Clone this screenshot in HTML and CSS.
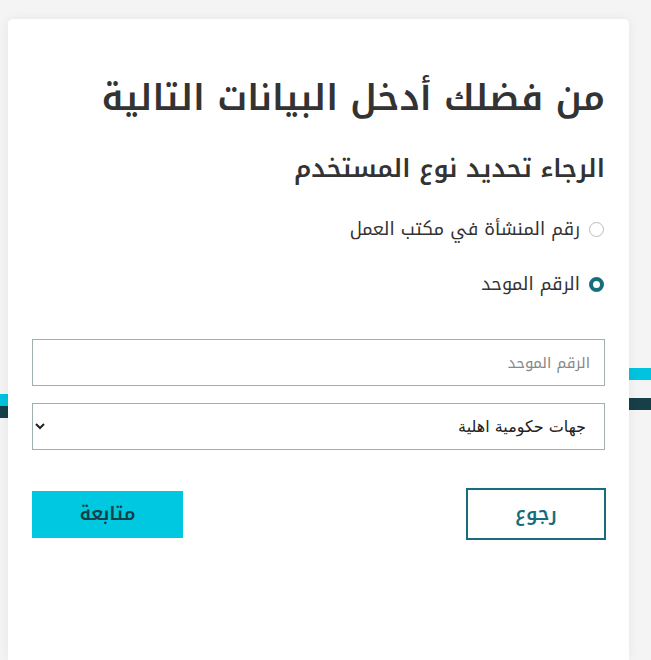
FILE: index.html
```html
<!DOCTYPE html>
<html lang="ar" dir="rtl">
<head>
<meta charset="utf-8">
<link rel="stylesheet" href="styles.css">
</head>
<body>
<div class="stripe stripe-right-a"></div>
<div class="stripe stripe-right-b"></div>
<div class="stripe stripe-left-a"></div>
<div class="stripe stripe-left-b"></div>
<main class="card">
  <h1 class="title">من فضلك أدخل البيانات التالية</h1>
  <h2 class="subtitle">الرجاء تحديد نوع المستخدم</h2>
  <div class="radios">
    <label class="radio"><input type="radio" name="t"><span class="dot"></span><span>رقم المنشأة في مكتب العمل</span></label>
    <label class="radio"><input type="radio" name="t" checked><span class="dot"></span><span>الرقم الموحد</span></label>
  </div>
  <div class="fields">
    <input class="field" type="text" placeholder="الرقم الموحد">
    <select class="field select">
      <option>جهات حكومية اهلية</option>
    </select>
  </div>
  <div class="actions">
    <button class="btn btn-back">رجوع</button>
    <button class="btn btn-next">متابعة</button>
  </div>
</main>
</body>
</html>
```
FILE: styles.css
```css
html, body { margin: 0; padding: 0; }
body {
  background: #f4f4f4;
  font-family: "Noto Kufi Arabic", "Noto Sans Arabic", "Noto Sans", sans-serif;
  color: #333;
  position: relative;
  height: 660px;
  overflow: hidden;
}
.stripe { position: absolute; height: 12px; }
.stripe-right-a { right: 0; width: 40px; top: 368px; background: #00c3df; }
.stripe-right-b { right: 0; width: 40px; top: 398px; background: #163f47; }
.stripe-left-a { left: 0; width: 40px; top: 394px; background: #00c3df; }
.stripe-left-b { left: 0; width: 40px; top: 406px; background: #163f47; }
.card {
  position: relative;
  margin: 19px 22px 0 8px;
  background: #fff;
  border-radius: 5px 5px 0 0;
  box-shadow: 0 0 12px rgba(0,0,0,0.06);
  padding: 49px 24px 0 24px;
  height: 641px;
  box-sizing: border-box;
}
.title {
  margin: 0;
  font-size: 36px;
  font-weight: 600;
  line-height: 60px;
  color: #333;
}
.subtitle {
  margin: 25px 0 0 0;
  font-size: 25px;
  font-weight: 600;
  line-height: 32px;
  color: #333;
}
.radios {
  display: flex;
  flex-direction: column;
  gap: 31px;
  margin-top: 32px;
}
.radio {
  display: flex;
  align-items: center;
  gap: 9px;
  font-size: 18px;
  line-height: 24px;
  color: #333;
  padding-right: 1px;
}
.radio input { display: none; }
.dot {
  width: 15px; height: 15px;
  border-radius: 50%;
  border: 1px solid #bbb;
  box-sizing: border-box;
  background: #fff;
}
.radio input:checked + .dot {
  border: 4px solid #176d7c;
}
.fields {
  display: flex;
  flex-direction: column;
  gap: 17px;
  margin-top: 43px;
}
.field {
  height: 47px;
  box-sizing: border-box;
  border: 1px solid #9eb0b0;
  border-radius: 0;
  background: #fff;
  padding: 0 14px;
  font-family: "Noto Kufi Arabic", "Noto Sans Arabic", "Noto Sans", sans-serif;
  font-size: 15px;
  color: #222;
  outline: none;
}
.field::placeholder { color: #888; }
.select { padding: 0 14px 0 4px; font-family: "DejaVu Sans", sans-serif; font-size: 16px; }
.actions {
  display: flex;
  justify-content: space-between;
  align-items: center;
  margin-top: 38px;
}
.btn {
  font-family: "Noto Kufi Arabic", "Noto Sans Arabic", "Noto Sans", sans-serif;
  font-size: 19px;
  font-weight: 600;
  cursor: pointer;
}
.btn-back {
  width: 140px; height: 52px;
  background: #fff;
  border: 2px solid #176d7c;
  color: #176d7c;
  margin-right: -1px;
}
.btn-next {
  width: 151px; height: 47px;
  background: #00c8e0;
  border: none;
  color: #10414a;
}
```
